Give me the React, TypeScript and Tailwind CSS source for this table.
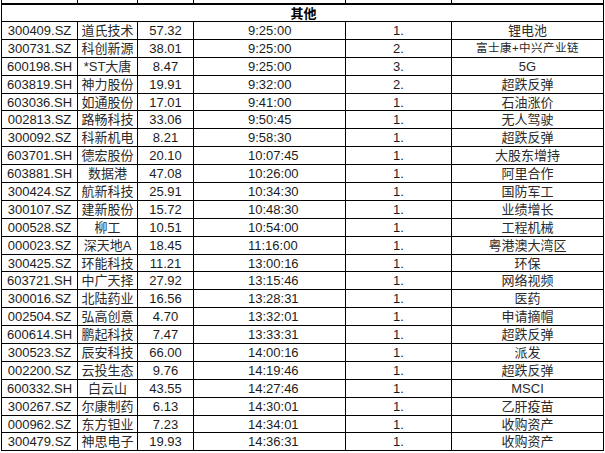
import React from "react";

const rows: [string, string, string, string, string, string][] = [
  ["300409.SZ", "道氏技术", "57.32", "9:25:00", "1.", "锂电池"],
  ["300731.SZ", "科创新源", "38.01", "9:25:00", "2.", "富士康+中兴产业链"],
  ["600198.SH", "*ST大唐", "8.47", "9:25:00", "3.", "5G"],
  ["603819.SH", "神力股份", "19.91", "9:32:00", "2.", "超跌反弹"],
  ["603036.SH", "如通股份", "17.01", "9:41:00", "1.", "石油涨价"],
  ["002813.SZ", "路畅科技", "33.06", "9:50:45", "1.", "无人驾驶"],
  ["300092.SZ", "科新机电", "8.21", "9:58:30", "1.", "超跌反弹"],
  ["603701.SH", "德宏股份", "20.10", "10:07:45", "1.", "大股东增持"],
  ["603881.SH", "数据港", "47.08", "10:26:00", "1.", "阿里合作"],
  ["300424.SZ", "航新科技", "25.91", "10:34:30", "1.", "国防军工"],
  ["300107.SZ", "建新股份", "15.72", "10:48:30", "1.", "业绩增长"],
  ["000528.SZ", "柳工", "10.51", "10:54:00", "1.", "工程机械"],
  ["000023.SZ", "深天地A", "18.45", "11:16:00", "1.", "粤港澳大湾区"],
  ["300425.SZ", "环能科技", "11.21", "13:00:16", "1.", "环保"],
  ["603721.SH", "中广天择", "27.92", "13:15:46", "1.", "网络视频"],
  ["300016.SZ", "北陆药业", "16.56", "13:28:31", "1.", "医药"],
  ["002504.SZ", "弘高创意", "4.70", "13:32:01", "1.", "申请摘帽"],
  ["600614.SH", "鹏起科技", "7.47", "13:33:31", "1.", "超跌反弹"],
  ["300523.SZ", "辰安科技", "66.00", "14:00:16", "1.", "派发"],
  ["002200.SZ", "云投生态", "9.76", "14:19:46", "1.", "超跌反弹"],
  ["600332.SH", "白云山", "43.55", "14:27:46", "1.", "MSCI"],
  ["300267.SZ", "尔康制药", "6.13", "14:30:01", "1.", "乙肝疫苗"],
  ["000962.SZ", "东方钽业", "7.23", "14:34:01", "1.", "收购资产"],
  ["300479.SZ", "神思电子", "19.93", "14:36:31", "1.", "收购资产"],
];

const font = { fontFamily: '"Liberation Sans", "Noto Sans CJK SC", sans-serif' };

export default function App() {
  return (
    <div className="w-[605px] h-[453px] bg-white overflow-hidden text-[#1c1c1c]" style={font}>
      <div className="ml-[1px] w-[603px] border-l border-black">
        <div className="grid grid-cols-[76px_60px_56px_152px_106px_152px] h-[3px]">
          <div className="border-r border-black" />
          <div className="border-r border-black" />
          <div className="border-r border-black" />
          <div className="border-r border-black" />
          <div className="border-r border-black" />
          <div className="border-r border-black" />
        </div>
        <div className="h-[19px] border-t-2 border-b border-r border-black flex items-center justify-center">
          <span className="text-[13px] font-bold leading-none pl-[2px] text-black">其他</span>
        </div>
        {rows.map((r, i) => (
          <div
            key={i}
            className="grid grid-cols-[76px_60px_56px_152px_106px_152px] h-[17.9px] border-b border-black text-[13px] leading-none"
          >
            <div className="border-r border-black flex items-center justify-center">{r[0]}</div>
            <div className="border-r border-black flex items-center justify-center text-[#2a2a2a]">{r[1]}</div>
            <div className="border-r border-black flex items-center justify-center">{r[2]}</div>
            <div className="border-r border-black flex items-center pl-[54px]">{r[3]}</div>
            <div className="border-r border-black flex items-center justify-center">{r[4]}</div>
            <div className="border-r border-black flex items-center justify-center text-[#2a2a2a]">
              <span className={i === 1 ? "text-[11.5px] tracking-[0.5px]" : ""}>{r[5]}</span>
            </div>
          </div>
        ))}
      </div>
    </div>
  );
}
